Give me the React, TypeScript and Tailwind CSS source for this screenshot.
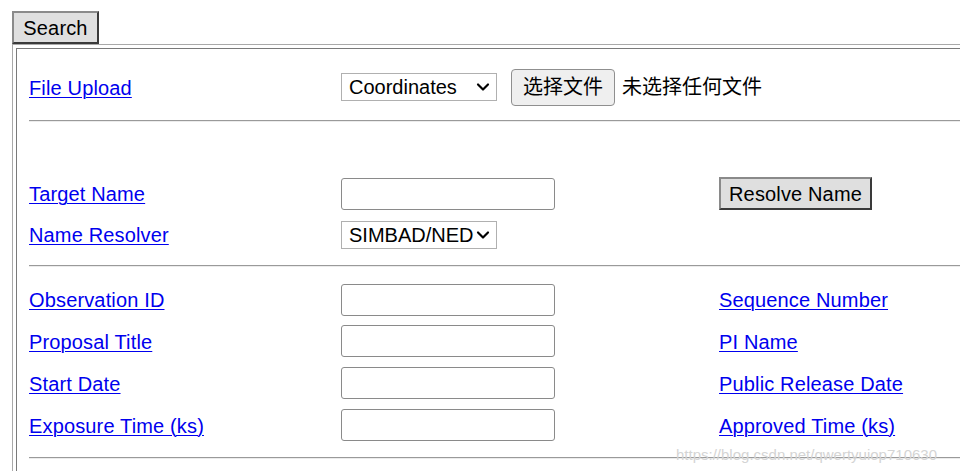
import React from 'react';
import { ChevronDown } from 'lucide-react';

const font = "font-['Liberation_Sans','Noto_Sans_CJK_SC',Arial,sans-serif]";

const Label = ({ children }: { children: React.ReactNode }) => (
  <a
    href="#"
    className="block pt-[1px] text-[20px] text-[#0000ee] underline underline-offset-[2px] decoration-1 leading-none tracking-[0.15px]"
  >
    {children}
  </a>
);

const TextBox = () => (
  <input
    type="text"
    className="w-[214px] h-[32px] rounded-[3px] border border-[#8a8a8a] bg-white outline-none"
  />
);

const Select = ({ value, options }: { value: string; options: string[] }) => (
  <div className="relative w-[156px] h-[28px]">
    <select
      defaultValue={value}
      className="appearance-none w-full h-full border border-[#b0b0b0] bg-white pl-[7px] text-[20px] text-black leading-none outline-none"
    >
      {options.map((o) => (
        <option key={o}>{o}</option>
      ))}
    </select>
    <ChevronDown
      size={20}
      strokeWidth={2.6}
      className="pointer-events-none absolute right-[4px] top-[4px] text-black"
    />
  </div>
);

const OldButton = ({ children, className = '' }: { children: React.ReactNode; className?: string }) => (
  <button
    className={`border-2 border-t-[#8a8a8a] border-l-[#8a8a8a] border-r-[#3a3a3a] border-b-[#3a3a3a] bg-[#dfdfdf] text-[20px] text-black leading-none tracking-[0.15px] ${className}`}
  >
    {children}
  </button>
);

const Rule = () => <div className="border-t border-b border-t-[#9a9a9a] border-b-[#ececec]" />;

const Row = ({ h, children }: { h: string; children: React.ReactNode }) => (
  <div className={`grid grid-cols-[312px_378px_1fr] items-center ${h}`}>{children}</div>
);

export default function App() {
  return (
    <div className={`relative w-screen h-[471px] overflow-hidden bg-white ${font}`}>
      <div className="w-[1100px] pl-[12px] pt-[11px]">
        <OldButton className="w-[87px] h-[33px]">Search</OldButton>

        {/* Search form frame */}
        <div className="border border-[#a9a9a9] p-[3px] pr-0 h-[440px]">
          <div className="h-full border-l border-t border-[#7a7a7a] pl-[12px] flex flex-col">
            <div className="mt-[18px]">
              <Row h="h-[40px]">
                <div><Label>File Upload</Label></div>
                <div className="flex items-center col-span-2">
                  <Select value="Coordinates" options={['Coordinates', 'Obs IDs']} />
                  <button className="ml-[14px] h-[37px] px-[11px] rounded-[4px] border border-[#8f8f8f] bg-[#efefef] text-[20px] text-black leading-none">
                    选择文件
                  </button>
                  <span className="ml-[7px] text-[20px] text-black">未选择任何文件</span>
                </div>
              </Row>
            </div>
            <div className="mt-[13px]">
              <Rule />
            </div>

            <div className="mt-[51px]">
              <Row h="h-[41px]">
                <div><Label>Target Name</Label></div>
                <div><TextBox /></div>
                <div>
                  <OldButton className="w-[153px] h-[33px]">Resolve Name</OldButton>
                </div>
              </Row>
              <Row h="h-[41px]">
                <div><Label>Name Resolver</Label></div>
                <div><Select value="SIMBAD/NED" options={['SIMBAD/NED', 'NED/SIMBAD']} /></div>
                <div />
              </Row>
            </div>
            <div className="mt-[10px]">
              <Rule />
            </div>

            <div className="mt-[12px]">
              <Row h="h-[41px]">
                <div><Label>Observation ID</Label></div>
                <div><TextBox /></div>
                <div><Label>Sequence Number</Label></div>
              </Row>
              <Row h="h-[42px]">
                <div><Label>Proposal Title</Label></div>
                <div><TextBox /></div>
                <div><Label>PI Name</Label></div>
              </Row>
              <Row h="h-[42px]">
                <div><Label>Start Date</Label></div>
                <div><TextBox /></div>
                <div><Label>Public Release Date</Label></div>
              </Row>
              <Row h="h-[42px]">
                <div><Label>Exposure Time (ks)</Label></div>
                <div><TextBox /></div>
                <div><Label>Approved Time (ks)</Label></div>
              </Row>
            </div>
            <div className="mt-[11px]">
              <Rule />
            </div>
          </div>
        </div>
      </div>

      {/* watermark */}
      <div className="absolute left-[676px] top-[444px] text-[15px] text-[#d4d4d4] pointer-events-none">
        https://blog.csdn.net/qwertyuiop710630
      </div>
    </div>
  );
}
